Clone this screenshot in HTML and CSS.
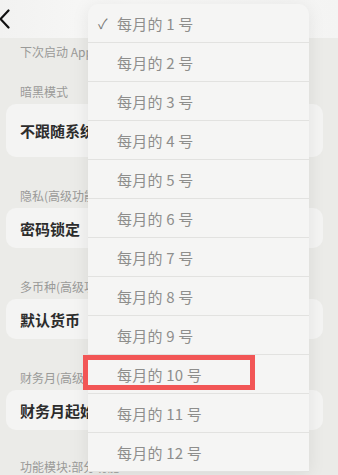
FILE: index.html
```html
<!DOCTYPE html>
<html lang="zh-CN">
<head>
    <meta charset="UTF-8">
    <meta name="viewport" content="width=device-width, initial-scale=1.0">
    <title>设置</title>
    <link rel="stylesheet" href="styles.css">
</head>
<body>
    <header class="top-bar">
        <svg class="back-icon" width="12" height="20" viewBox="0 0 12 20">
            <path d="M9.5 1.5 L1.5 10 L9.5 18.5" fill="none" stroke="#111" stroke-width="2.2" stroke-linecap="round" stroke-linejoin="round"/>
        </svg>
    </header>

    <main class="settings">
        <p class="hint first-hint">下次启动 App 后生效</p>

        <section class="group">
            <p class="label">暗黑模式</p>
            <div class="card tall">不跟随系统</div>
        </section>

        <section class="group">
            <p class="label">隐私(高级功能)</p>
            <div class="card">密码锁定</div>
        </section>

        <section class="group">
            <p class="label">多币种(高级功能)</p>
            <div class="card">默认货币</div>
        </section>

        <section class="group">
            <p class="label">财务月(高级功能)</p>
            <div class="card">财务月起始</div>
        </section>

        <section class="group last">
            <p class="label">功能模块:部分功能</p>
        </section>
    </main>

    <!-- 弹出菜单 -->
    <ul class="menu">
        <li class="checked"><span class="check">✓</span>每月的 1 号</li>
        <li>每月的 2 号</li>
        <li>每月的 3 号</li>
        <li>每月的 4 号</li>
        <li>每月的 5 号</li>
        <li>每月的 6 号</li>
        <li>每月的 7 号</li>
        <li>每月的 8 号</li>
        <li>每月的 9 号</li>
        <li>每月的 10 号</li>
        <li>每月的 11 号</li>
        <li>每月的 12 号</li>
    </ul>

    <div class="highlight"></div>
</body>
</html>
```

FILE: styles.css
```css
body {
    margin: 0;
    padding: 0;
    font-family: "Noto Sans CJK SC", "Noto Sans", sans-serif;
    background-color: #ebebe8;
    color: #2a2a2a;
    overflow: hidden;
    height: 475px;
    position: relative;
}

.top-bar {
    height: 38px;
    display: flex;
    align-items: center;
    background: linear-gradient(90deg, #f2f2f1, #f9f9f8 40%, #f4f4f3);
}

.back-icon {
    display: block;
    margin-left: -1px;
}

.settings {
    padding: 0 15px 0 6px;
}

.hint,
.label {
    margin: 0;
    font-size: 12px;
    line-height: 16px;
    color: #9a9a98;
    padding-left: 14px;
    white-space: nowrap;
}

.first-hint {
    padding-top: 6px;
}

.group .label {
    margin-top: 24px;
    margin-bottom: 4px;
}

.group + .group .label {
    margin-top: 31px;
}

.group.last .label {
    margin-top: 29px;
}

.card {
    background-color: #f4f4f3;
    border-radius: 10px;
    height: 40px;
    display: flex;
    align-items: center;
    padding-left: 14px;
    font-size: 15px;
    font-weight: bold;
    color: #2c2c2c;
}

.card.tall {
    height: 53px;
}

.menu {
    position: absolute;
    top: 4px;
    left: 88px;
    width: 221px;
    margin: 0;
    padding: 0;
    list-style: none;
    background-color: #f5f5f4;
    border-radius: 10px 10px 0 0;
    box-shadow: 0 2px 18px rgba(0, 0, 0, 0.08);
}

.menu li {
    position: relative;
    height: 39px;
    line-height: 39px;
    padding-left: 29px;
    font-size: 15px;
    color: #8e8e8c;
    border-bottom: 1px solid #e2e2e0;
    box-sizing: border-box;
    letter-spacing: 0.2px;
}

.menu .check {
    position: absolute;
    left: 10px;
    top: 0;
    font-size: 14px;
    color: #7a7a78;
}

.highlight {
    position: absolute;
    left: 83px;
    top: 355px;
    width: 162px;
    height: 25px;
    border: 5px solid #f25656;
}
```
